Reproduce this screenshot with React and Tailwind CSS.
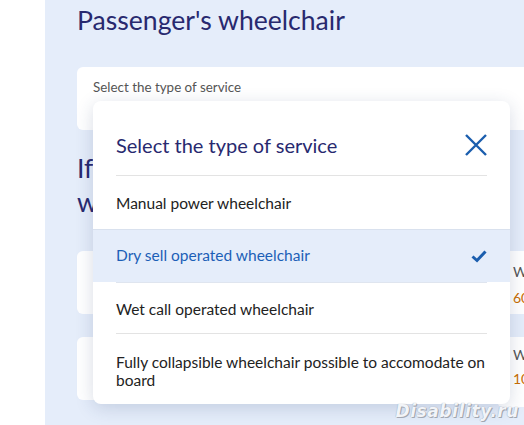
import React from "react";

export default function App() {
  return (
    <div className="relative w-[524px] h-[425px] overflow-hidden bg-white flex font-['Lato','Noto_Sans',sans-serif]">
      <div className="w-[45px] shrink-0 bg-white" />
      <div className="flex-1 bg-[#e5edfa] pl-[32px] pt-[3px] flex flex-col">
        <h1 className="text-[26.6px] leading-[34px] text-[#28296f] whitespace-nowrap">Passenger's wheelchair</h1>
        <div className="mt-[30px] h-[63px] bg-white rounded-l-[6px] pl-[16px] pt-[11px]">
          <div className="text-[13.4px] leading-[18px] text-[#555]">Select the type of service</div>
        </div>
        <div className="mt-[21px] flex justify-between pr-[2px] text-[26.6px] leading-[34px] text-[#28296f] whitespace-nowrap">
          <span>If the passenger travels with</span>
          <span>a</span>
        </div>
        <div className="text-[26.6px] leading-[34px] text-[#28296f] whitespace-nowrap">wheelchair</div>
        <div className="mt-[32px] flex gap-[10px]">
          <div className="w-[410px] h-[63px] bg-white rounded-[6px]" />
          <div className="flex-1 h-[63px] bg-white rounded-l-[6px] pl-[16px] pt-[8px] text-[14px] leading-[26px] whitespace-nowrap">
            <div className="text-[#555]">Weight</div>
            <div className="text-[#c96d00]">60 kg</div>
          </div>
        </div>
        <div className="mt-[23px] flex gap-[10px]">
          <div className="w-[410px] h-[63px] bg-white rounded-[6px]" />
          <div className="flex-1 h-[70px] bg-white rounded-l-[6px] pl-[16px] pt-[6px] text-[14px] leading-[24px] whitespace-nowrap">
            <div className="text-[#555]">Width</div>
            <div className="text-[#c96d00]">100 cm</div>
          </div>
        </div>
      </div>

      <div className="absolute left-[93px] top-[101px] w-[417px] h-[303px] bg-white rounded-[8px] shadow-[0_4px_18px_rgba(40,60,110,0.18)] flex flex-col overflow-hidden">
        <div className="mx-[23px] h-[75px] flex items-center justify-between border-b border-[#e3e3e3] pt-[14px]">
          <span className="text-[20px] text-[#28296f]">Select the type of service</span>
          <svg width="24" height="24" viewBox="0 0 24 24" className="mr-[-1px]">
            <path d="M2 2 L22 22 M22 2 L2 22" stroke="#1b5eae" strokeWidth="2.4" strokeLinecap="butt" fill="none" />
          </svg>
        </div>
        <div className="mx-[23px] h-[53px] flex items-center text-[15.5px] text-[#222] pt-[2px]">Manual power wheelchair</div>
        <div className="h-[53px] bg-[#e5edfa] border-t border-[#d9e1ee] px-[23px] flex items-center justify-between">
          <span className="text-[15.5px] text-[#1c5fb7]">Dry sell operated wheelchair</span>
          <svg width="16" height="13" viewBox="0 0 16 13">
            <path d="M1.5 6.5 L6 10.5 L14.5 1.5" stroke="#1b5eae" strokeWidth="3" fill="none" strokeLinejoin="miter" />
          </svg>
        </div>
        <div className="mx-[23px] h-[52px] flex items-center border-b border-[#e3e3e3] text-[15.5px] text-[#222] border-t border-t-[#dfe5ef] pt-[3px]">Wet call operated wheelchair</div>
        <div className="mx-[23px] pt-[19px] text-[15.5px] leading-[18px] text-[#222]">
          Fully collapsible wheelchair possible to accomodate on board
        </div>
      </div>

      <div className="absolute right-[5px] bottom-[1px] text-[17px] italic font-bold tracking-[0.6px] text-[#f2f4f8] font-['DejaVu_Sans',sans-serif] [text-shadow:0_0_1px_#8a909a,1px_1px_0_#a4aab4]">
        Disability.ru
      </div>
    </div>
  );
}
